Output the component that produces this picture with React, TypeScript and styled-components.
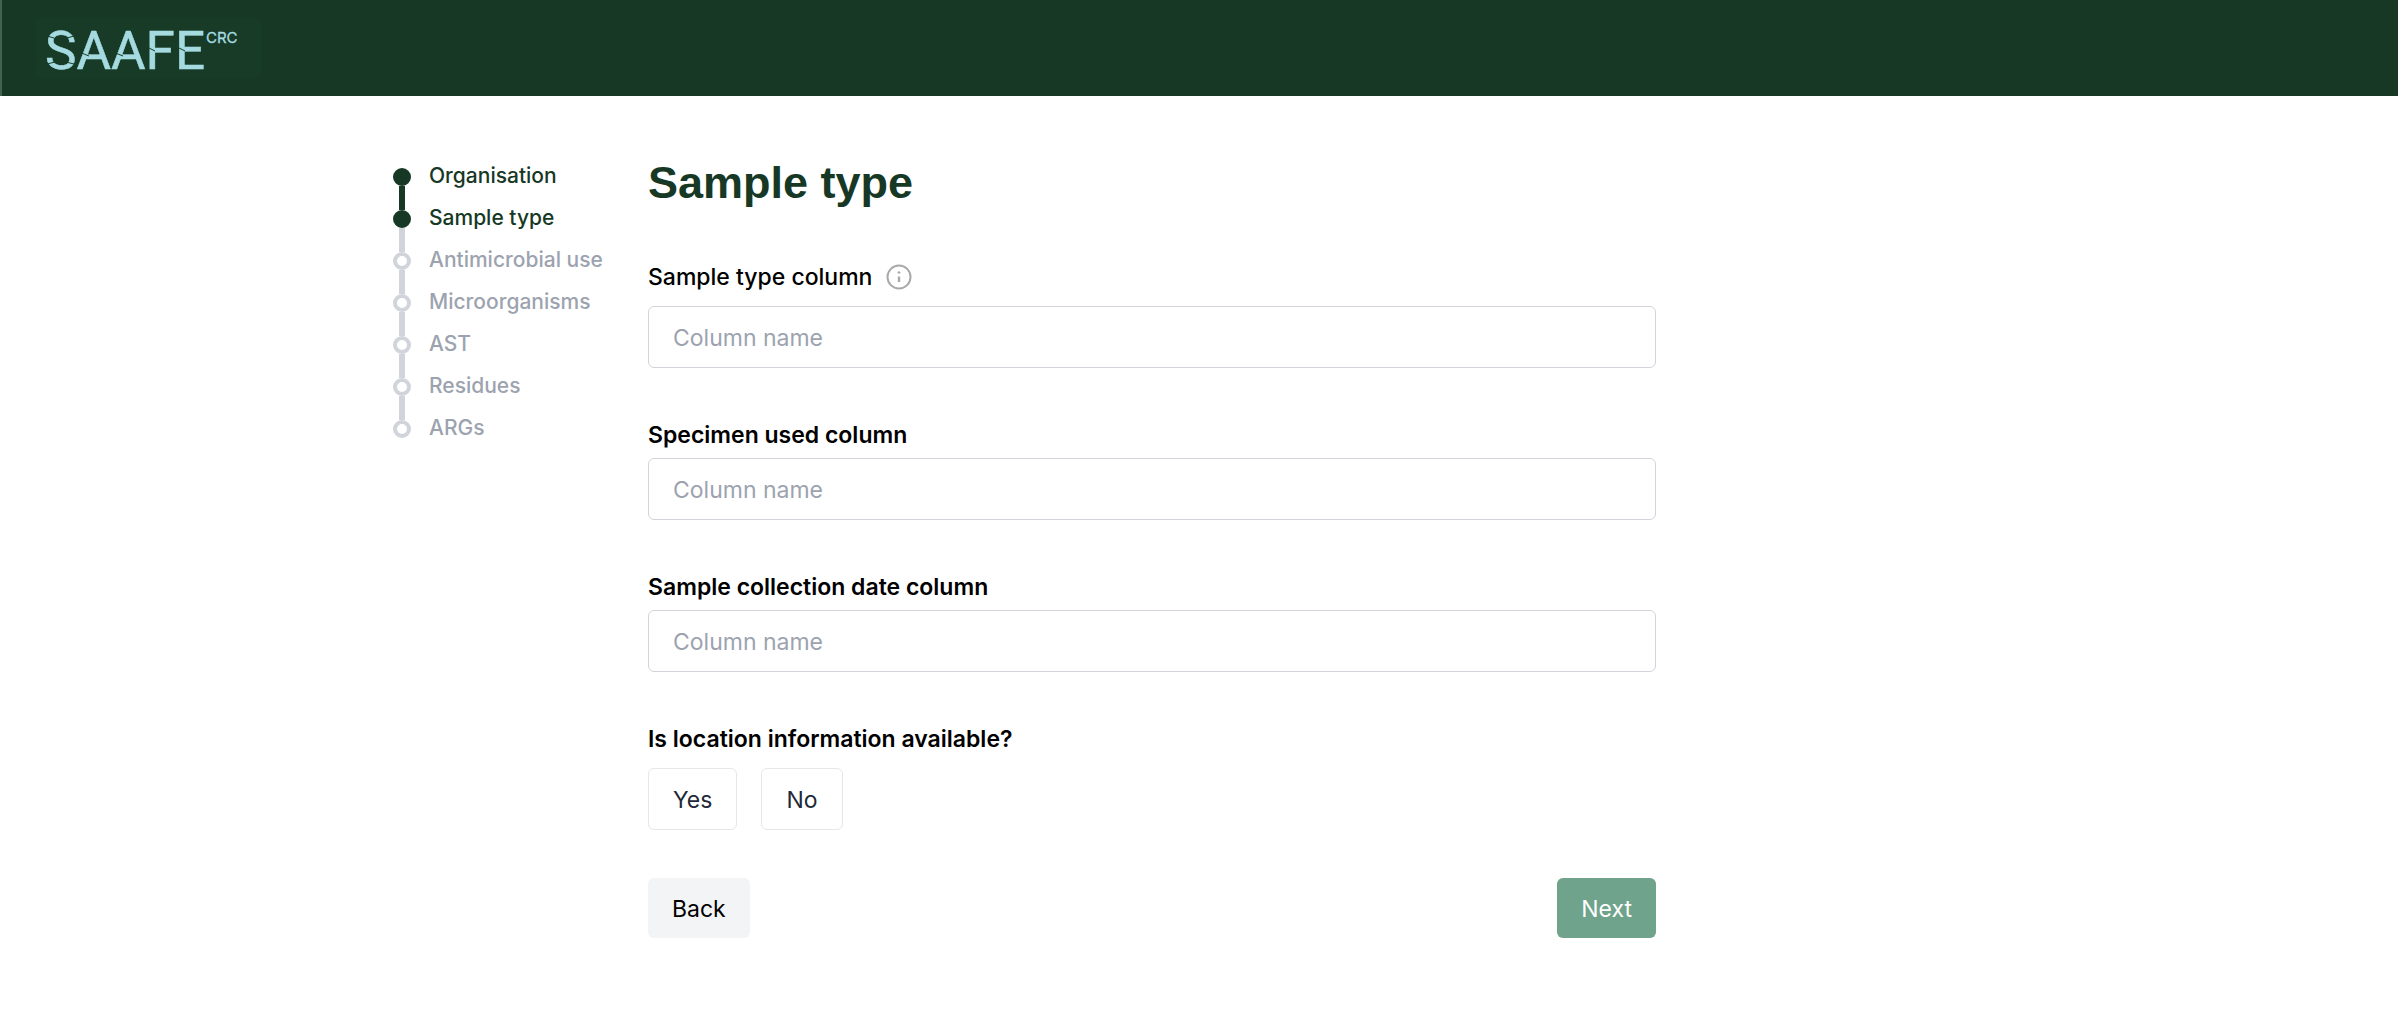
import React from "react";
import styled, { createGlobalStyle } from "styled-components";

const GlobalStyle = createGlobalStyle`
  *, *::before, *::after { box-sizing: border-box; }
  body {
    margin: 0;
    background: #ffffff;
    color: #000000;
    font-family: Inter, "Liberation Sans", sans-serif;
    font-size: 23px;
    line-height: 38px;
  }
`;

const Header = styled.header`
  display: flex;
  align-items: center;
  height: 96px;
  padding-left: 34px;
  background: #163825;
  border-left: 2px solid #436350;
`;

const LogoLink = styled.a`
  display: flex;
  background: #173b27;
`;

const LogoMark = styled.svg`
  display: block;
  overflow: visible;
`;

const Main = styled.main`
  display: grid;
  grid-template-columns: 256px minmax(0, 1008px);
  align-items: start;
  width: 100%;
  max-width: 1662px;
  margin: 0 auto;
  padding: 60px 24px;
`;

const Steps = styled.ol`
  list-style: none;
  margin: 0;
  padding: 0;
`;

const Step = styled.li<{ $reached: boolean }>`
  display: flex;
  align-items: stretch;
  gap: 18px;
  height: 42px;
  font-size: 21px;
  font-weight: 500;
  line-height: 40px;
  color: ${(p) => (p.$reached ? "#163825" : "#9ca3af")};
`;

const Rail = styled.span`
  display: flex;
  flex-direction: column;
  align-items: center;
  width: 18px;
  margin-left: 1px;
`;

const Line = styled.span<{ $tone: "dark" | "light" | "none" }>`
  flex: 1;
  width: 6px;
  background: ${(p) => ({ dark: "#163825", light: "#d1d5db", none: "transparent" })[p.$tone]};
`;

const Dot = styled.span<{ $reached: boolean }>`
  width: 18px;
  height: 18px;
  border-radius: 50%;
  border: 4px solid ${(p) => (p.$reached ? "#163825" : "#d1d5db")};
  background: ${(p) => (p.$reached ? "#163825" : "#ffffff")};
`;

const Form = styled.form`
  display: flex;
  flex-direction: column;
  gap: 48px;
`;

const Title = styled.h1`
  margin: 0;
  font-family: "Liberation Sans", Arial, sans-serif;
  font-size: 45px;
  font-weight: 700;
  line-height: 54px;
  color: #163825;
`;

const Field = styled.div<{ $gap: number }>`
  display: flex;
  flex-direction: column;
  gap: ${(p) => p.$gap}px;
`;

const LabelRow = styled.div`
  display: flex;
  align-items: center;
  gap: 14px;
`;

const Label = styled.label<{ $weight: number }>`
  font-weight: ${(p) => p.$weight};
`;

const InfoButton = styled.button`
  display: flex;
  padding: 0;
  border: 0;
  background: none;
  color: #a9a9a9;
`;

const TextInput = styled.input`
  width: 100%;
  height: 62px;
  padding: 2px 24px 0;
  border: 1px solid #d1d5db;
  border-radius: 6px;
  background: #ffffff;
  font: inherit;
  color: #1f2937;
  &::placeholder { color: #9ca3af; opacity: 1; }
`;

const Question = styled.fieldset`
  margin: 0;
  padding: 0;
  border: 0;
`;

const Legend = styled.legend`
  padding: 0;
  margin-bottom: 10px;
  font-weight: 600;
`;

const Choices = styled.div`
  display: flex;
  gap: 24px;
`;

const Choice = styled.button`
  height: 62px;
  padding: 2px 24px 0;
  border: 1px solid #e5e7eb;
  border-radius: 6px;
  background: #ffffff;
  font: inherit;
  color: #1f2937;
`;

const Actions = styled.div`
  display: flex;
  justify-content: space-between;
`;

const Action = styled.button<{ $primary?: boolean }>`
  height: 60px;
  padding: 2px 24px 0;
  border: 0;
  border-radius: 6px;
  background: ${(p) => (p.$primary ? "#6fa38b" : "#f3f4f6")};
  font: inherit;
  color: ${(p) => (p.$primary ? "#ffffff" : "#000000")};
`;

const Logo = () => (
  <LogoMark width="225" height="60" viewBox="0 0 225 60" role="img" aria-label="SAAFE CRC">
    <g fill="#a5dbe0" fontFamily="Roboto, sans-serif">
      <text x="9" y="51" fontSize="53" stroke="#a5dbe0" strokeWidth="0.5">SAAFE</text>
      <text x="170" y="25" fontSize="15" fontFamily="Inter, sans-serif" stroke="#a5dbe0" strokeWidth="0.3">CRC</text>
    </g>
    <path
      d="M11 18l7 2M31 20l7-2M11 46l8-2M30 44l8 2M43 34l10 4M77 34l10 4M111 29l8 4M141 29l8 4"
      stroke="#173b27"
      strokeWidth="1"
    />
  </LogoMark>
);

const InfoIcon = () => (
  <svg width="26" height="26" viewBox="0 0 26 26" fill="none" stroke="currentColor" aria-hidden="true">
    <circle cx="13" cy="13" r="11.5" strokeWidth="2" />
    <path d="M13 12.5v5.5" strokeWidth="2.4" />
    <path d="M13 7v3M11.5 8.5h3" strokeWidth="1.2" />
  </svg>
);

const steps = ["Organisation", "Sample type", "Antimicrobial use", "Microorganisms", "AST", "Residues", "ARGs"];
const current = 1;

const fields = [
  { id: "sample-type", label: "Sample type column", info: true },
  { id: "specimen", label: "Specimen used column", info: false },
  { id: "collection-date", label: "Sample collection date column", info: false },
];

const tone = (index: number) => {
  if (index < 1 || index >= steps.length) return "none";
  return index <= current ? "dark" : "light";
};

export default function App() {
  return (
    <>
      <GlobalStyle />
      <Header>
        <LogoLink href="#">
          <Logo />
        </LogoLink>
      </Header>
      <Main>
        <Steps>
          {steps.map((name, i) => (
            <Step key={name} $reached={i <= current} aria-current={i === current ? "step" : undefined}>
              <Rail>
                <Line $tone={tone(i)} />
                <Dot $reached={i <= current} />
                <Line $tone={tone(i + 1)} />
              </Rail>
              {name}
            </Step>
          ))}
        </Steps>
        <Form onSubmit={(e) => e.preventDefault()}>
          <Title>Sample type</Title>
          {fields.map((f) => (
            <Field key={f.id} $gap={f.info ? 10 : 4}>
              <LabelRow>
                <Label htmlFor={f.id} $weight={f.info ? 500 : 600}>{f.label}</Label>
                {f.info && (
                  <InfoButton type="button" aria-label="About this column">
                    <InfoIcon />
                  </InfoButton>
                )}
              </LabelRow>
              <TextInput id={f.id} type="text" placeholder="Column name" />
            </Field>
          ))}
          <Question>
            <Legend>Is location information available?</Legend>
            <Choices>
              <Choice type="button">Yes</Choice>
              <Choice type="button">No</Choice>
            </Choices>
          </Question>
          <Actions>
            <Action type="button">Back</Action>
            <Action type="submit" $primary>Next</Action>
          </Actions>
        </Form>
      </Main>
    </>
  );
}
